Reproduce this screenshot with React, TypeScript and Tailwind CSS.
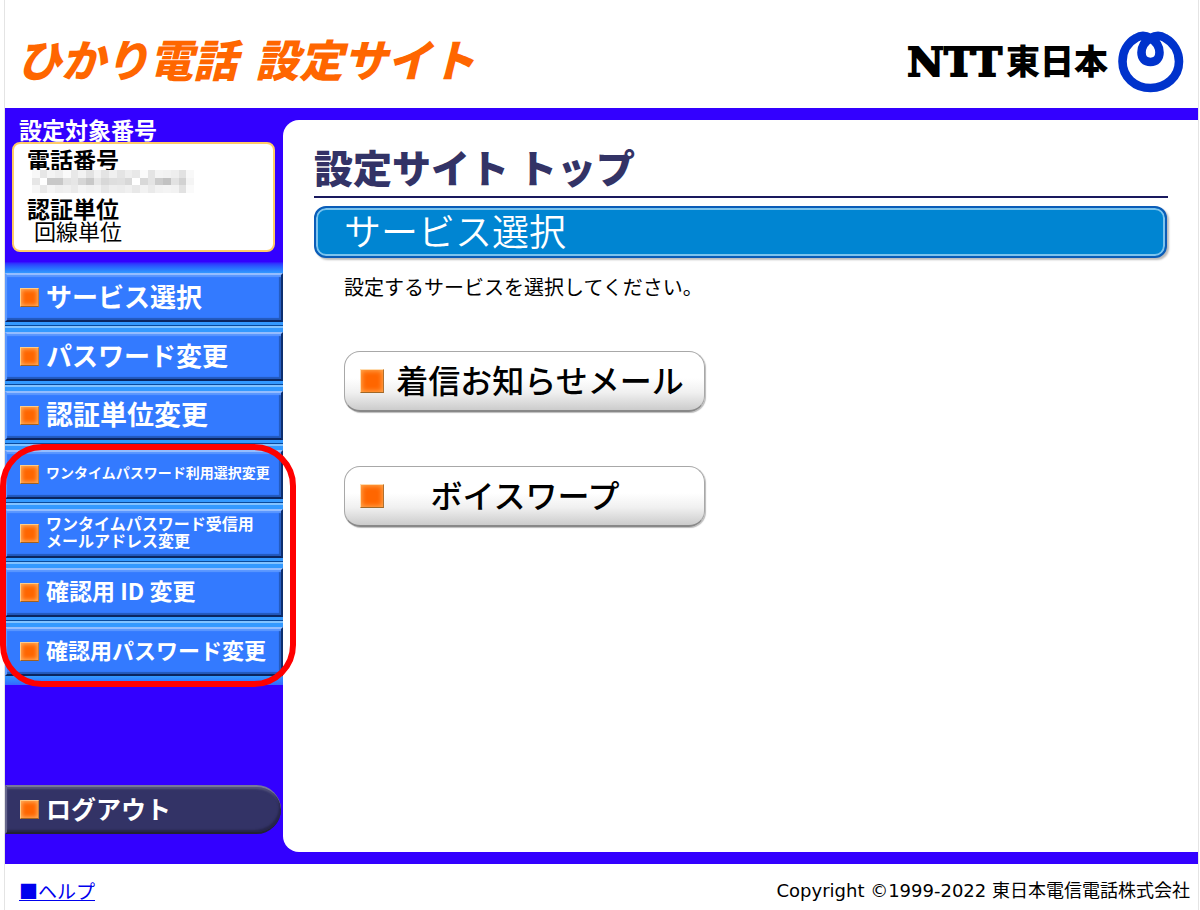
type MenuItem = { label: string[]; size: string };

const mainMenu: MenuItem[] = [
  { label: ["サービス選択"], size: "text-[26px]" },
  { label: ["パスワード変更"], size: "text-[26px]" },
  { label: ["認証単位変更"], size: "text-[27px]" },
];

const securityMenu: MenuItem[] = [
  { label: ["ワンタイムパスワード利用選択変更"], size: "text-[14px]" },
  { label: ["ワンタイムパスワード受信用", "メールアドレス変更"], size: "text-[16px]" },
  { label: ["確認用 ID 変更"], size: "text-[23px]" },
  { label: ["確認用パスワード変更"], size: "text-[22px]" },
];

// Shades of the masked phone number, one row per line of blocks
const maskRows = [
  ["f8", "e6", "f4", "ee", "fa", "e8", "f2", "e2", "f2", "e4", "f0", "e4", "ee", "e8", "fa", "e4", "f4", "f2", "ee", "e2", "f8"],
  ["e6", "ff", "c8", "c8", "e2", "e6", "d6", "c8", "e6", "d8", "de", "e0", "d8", "ff", "d8", "e4", "cc", "c2", "e2", "d2", "f4"],
  ["f6", "e8", "f4", "ee", "f0", "ea", "f4", "f0", "f2", "e6", "ee", "ec", "f0", "e8", "f2", "ea", "f2", "f4", "f2", "e2", "fa"],
];

const MaskedNumber = () => (
  <svg className="ml-[18px] h-[23px] w-[162px]" viewBox="0 0 21 3" preserveAspectRatio="none" shapeRendering="crispEdges" aria-hidden="true">
    {maskRows.map((row, y) =>
      row.map((c, x) => <rect key={`${x}-${y}`} x={x} y={y} width={1} height={1} fill={`#${c}${c}${c}`} />)
    )}
  </svg>
);

const Bullet = () => (
  <span className="h-[19px] w-[19px] shrink-0 border border-t-[#ffcc88] border-r-[#c08040] border-b-[#a06020] border-l-[#ffcc88] bg-[#ff6600] shadow-[inset_0_0_4px_1px_#ffb060]" />
);

const NttMark = () => (
  <svg className="h-[62px] w-[66px]" viewBox="0 0 66 62" fill="none" stroke="#0033cc" strokeWidth="8.6" strokeLinejoin="round" aria-hidden="true">
    <path d="M32.5 7C37 4.5 42 3.8 47 7C56 12 61 21 61 30.500C61 46 48 57 32.500 57C17 57 4.500 46 4.500 30.500C4.500 21 9 12 18 7C23 3.800 28 4.500 32.500 7C38 10.500 41.500 16 41.500 21.500C41.500 27.500 38 31 32.500 31C27 31 23.500 27.500 23.500 21.500C23.500 16 27 10.500 32.500 7Z" />
  </svg>
);

const Separator = () => (
  <div className="h-[10px] bg-[linear-gradient(#3399ff_0_3px,#0a4a9c_3px_4px,#83c3ff_4px_6px,#3399ff_6px_10px)]" />
);

const MenuButton = ({ item }: { item: MenuItem }) => (
  <a
    href="#"
    className="flex h-[49px] items-center gap-[7px] border-t-2 border-r-2 border-b-2 border-l-2 border-t-[#94bdff] border-r-[#0c2f70] border-b-[#0a2560] border-l-[#5c98ff] bg-[#337aff] pl-[13px] shadow-[inset_0_2px_1px_#5c98ff,inset_-2px_-2px_1px_#2258bb]"
  >
    <Bullet />
    <span className={`${item.size} pb-1 leading-[17px] font-bold whitespace-nowrap text-white`}>
      {item.label.map((line) => (
        <span key={line} className="block">
          {line}
        </span>
      ))}
    </span>
  </a>
);

const ServiceButton = ({ label, labelClass }: { label: string; labelClass: string }) => (
  <button className="flex h-[61px] w-[361px] items-center rounded-2xl border border-b-2 border-[#a8a8a8] border-b-[#888888] bg-[linear-gradient(#ffffff_45%,#f0f0f0_70%,#cccccc)] pl-[15px] shadow-[1px_1px_1px_#bbbbbb]">
    <span className="h-6 w-6 shrink-0 border border-t-[#ffdcb0] border-r-[#b07030] border-b-[#a06828] border-l-[#ffdcb0] bg-[#ff6600] shadow-[inset_0_0_5px_1px_#ffa850]" />
    <span className={`${labelClass} flex-1 pb-1 text-center text-[32px] leading-[40px] font-medium whitespace-nowrap text-black`}>{label}</span>
  </button>
);

const Sidebar = () => (
  <aside className="flex w-[278px] shrink-0 flex-col">
    <h2 className="pb-1 pl-[14px] text-[23px] leading-[18px] font-bold text-white">設定対象番号</h2>
    <dl className="mr-2 ml-[7px] h-[110px] rounded-lg border-2 border-[#ffcc66] bg-white pt-1 text-black">
      <dt className="pl-[13px] text-[23px] leading-[22px] font-bold">電話番号</dt>
      <dd>
        <MaskedNumber />
      </dd>
      <dt className="mt-1 pl-[13px] text-[23px] leading-[22px] font-bold">認証単位</dt>
      <dd className="pl-5 text-[22px] leading-[22px]">回線単位</dd>
    </dl>
    <nav className="mt-[10px]">
      <div className="h-[11px] bg-gradient-to-b from-[#3300ff] to-[#3399ff]" />
      {mainMenu.map((item) => (
        <div key={item.label[0]}>
          <MenuButton item={item} />
          <Separator />
        </div>
      ))}
      <div className="relative">
        {securityMenu.map((item, i) => (
          <div key={item.label[0]}>
            {i > 0 && <Separator />}
            <MenuButton item={item} />
          </div>
        ))}
        <div className="h-[9px] bg-gradient-to-b from-[#3399ff] to-[#3366ff]" />
        <div className="pointer-events-none absolute -top-[6px] -right-[13px] -bottom-[2px] -left-[5px] rounded-[42px] border-6 border-[#ff0000]" />
      </div>
    </nav>
    <a
      href="#"
      className="mt-auto mr-[2px] mb-[18px] flex h-[49px] items-center gap-[7px] rounded-r-full border-t-2 border-b-2 border-l-2 border-t-[#77779a] border-b-[#222233] border-l-[#66668c] bg-[#333366] pl-[13px] shadow-[inset_-2px_-2px_2px_#26264a,inset_0_2px_2px_#55557c]"
    >
      <Bullet />
      <span className="pb-1 text-[25px] leading-[26px] font-bold text-white">ログアウト</span>
    </a>
  </aside>
);

export default function App() {
  return (
    <div className="mr-px ml-1 flex min-h-screen flex-col border-x border-[#e4e4e4] bg-white font-['Noto_Sans_CJK_JP',sans-serif]">
      <header className="flex h-[108px] items-center justify-between pt-4 pr-[14px] pl-3">
        <h1 className="flex gap-[18px] pb-2 text-[44px] leading-[60px] font-black whitespace-nowrap text-[#ff6600] italic">
          <span>ひかり電話</span>
          <span>設定サイト</span>
        </h1>
        <div className="flex items-center whitespace-nowrap text-black">
          <span className="font-['DejaVu_Serif',serif] text-[40px] leading-[60px] font-bold [-webkit-text-stroke:2px_black]">NTT</span>
          <span className="mr-[10px] ml-1 pb-1 text-[34px] leading-[60px] font-black">東日本</span>
          <NttMark />
        </div>
      </header>

      <div className="flex flex-1 bg-[#3300ff] py-3">
        <Sidebar />
        <main className="flex-1 rounded-l-2xl bg-white pt-6 pr-[30px] pl-[31px]">
          <h2 className="border-b-2 border-[#19195e] pb-2 text-[39px] leading-[44px] font-black text-[#333366]">設定サイト トップ</h2>
          <h3 className="mt-2 mr-px rounded-xl border-2 border-[#0a5cb8] bg-[#0085d2] px-7 pb-1 text-[37px] leading-[44px] font-[350] text-white shadow-[inset_0_0_0_2px_#7cc4ee,2px_2px_2px_#bbbbbb]">
            サービス選択
          </h3>
          <p className="mt-[13px] pl-[30px] text-[20px] leading-[32px] text-black">設定するサービスを選択してください。</p>
          <div className="mt-[48px] flex flex-col gap-[54px] pl-[30px]">
            <ServiceButton label="着信お知らせメール" labelClass="pr-5 pl-3" />
            <ServiceButton label="ボイスワープ" labelClass="pr-[38px]" />
          </div>
        </main>
      </div>

      <footer className="flex h-[46px] items-center justify-between pt-2 pr-2 pl-[14px] leading-[24px]">
        <a href="#" className="text-[19px] text-[#0000ee] underline">
          ■ヘルプ
        </a>
        <small className="font-['DejaVu_Sans','Noto_Sans_CJK_JP',sans-serif] text-[18px] text-black">
          Copyright ©1999-2022 東日本電信電話株式会社
        </small>
      </footer>
    </div>
  );
}
